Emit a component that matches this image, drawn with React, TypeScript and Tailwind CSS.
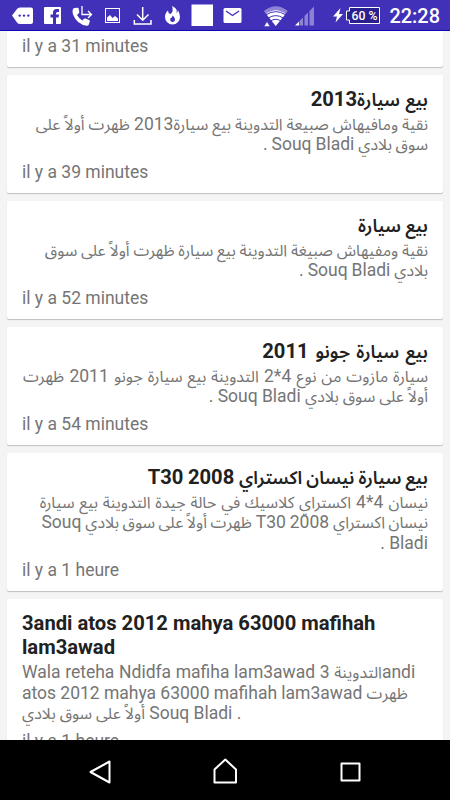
import React from "react";
import clsx from "clsx";

interface TextLine {
  text: string;
  spacing?: string;
}

interface Post {
  title: TextLine[];
  body: TextLine[];
  time: string;
  ltr?: boolean;
}

const posts: Post[] = [
  {
    title: [{ text: "بيع سيارة2013", spacing: "[word-spacing:1px]" }],
    body: [
      { text: "نقية ومافيهاش صبيعة التدوينة بيع سيارة2013 ظهرت أولاً على" },
      { text: "سوق بلادي Souq Bladi .", spacing: "[word-spacing:-0.4px]" },
    ],
    time: "il y a 39 minutes",
  },
  {
    title: [{ text: "بيع سيارة" }],
    body: [
      {
        text: "نقية ومفيهاش صبيغة التدوينة بيع سيارة ظهرت أولاً على سوق",
        spacing: "[word-spacing:-0.2px]",
      },
      { text: "بلادي Souq Bladi .", spacing: "[word-spacing:-0.4px]" },
    ],
    time: "il y a 52 minutes",
  },
  {
    title: [{ text: "بيع سيارة جونو 2011", spacing: "[word-spacing:1.8px]" }],
    body: [
      {
        text: "سيارة مازوت من نوع 4*2 التدوينة بيع سيارة جونو 2011 ظهرت",
        spacing: "[word-spacing:0.9px]",
      },
      { text: "أولاً على سوق بلادي Souq Bladi ." },
    ],
    time: "il y a 54 minutes",
  },
  {
    title: [
      {
        text: "بيع سيارة نيسان اكستراي T30 2008",
        spacing: "[word-spacing:-0.4px]",
      },
    ],
    body: [
      {
        text: "نيسان 4*4 اكستراي كلاسيك في حالة جيدة التدوينة بيع سيارة",
        spacing: "[word-spacing:0.8px]",
      },
      {
        text: "نيسان اكستراي T30 2008 ظهرت أولاً على سوق بلادي Souq",
        spacing: "[word-spacing:-0.4px]",
      },
      { text: "Bladi ." },
    ],
    time: "il y a 1 heure",
  },
  {
    title: [
      { text: "3andi atos 2012 mahya 63000 mafihah" },
      { text: "lam3awad" },
    ],
    body: [
      {
        text: "Wala reteha Ndidfa mafiha lam3awad التدوينة 3andi",
        spacing: "[word-spacing:0.3px]",
      },
      {
        text: "atos 2012 mahya 63000 mafihah lam3awad ظهرت",
        spacing: "[word-spacing:-0.1px]",
      },
      { text: "أولاً على سوق بلادي Souq Bladi ." },
    ],
    time: "il y a 1 heure",
    ltr: true,
  },
];

// Arabic runs get their own size so they sit well next to Roboto
function Line({ text, arabic }: { text: string; arabic: string }) {
  return (
    <>
      {text.split(/([\u0600-\u06FF]+(?:\s+[\u0600-\u06FF]+)*)/).map((part, i) =>
        i % 2 ? (
          <span key={i} className={clsx("leading-[0]", arabic)}>
            {part}
          </span>
        ) : (
          part
        )
      )}
    </>
  );
}

function PostCard({ post }: { post: Post }) {
  return (
    <article className="shrink-0 rounded-[2px] bg-white px-[15px] pt-[12px] pb-[10.6px] shadow-[0_1px_1px_rgba(0,0,0,0.22)]">
      <div dir={post.ltr ? "ltr" : "rtl"}>
        {post.title.map(({ text, spacing }) => (
          <h2
            key={text}
            className={clsx(
              "h-[24px] whitespace-nowrap text-[20.2px] leading-[24px] font-bold text-[#212121]",
              spacing
            )}
          >
            <Line text={text} arabic="text-[18px] font-semibold" />
          </h2>
        ))}
        <div className="mt-[3px]">
          {post.body.map(({ text, spacing }) => (
            <p
              key={text}
              className={clsx(
                "h-[20.4px] whitespace-nowrap text-[17.5px] leading-[20.4px] text-[#757575]",
                spacing
              )}
            >
              <Line text={text} arabic="text-[16px]" />
            </p>
          ))}
        </div>
      </div>
      <Time text={post.time} className="mt-[7.1px]" />
    </article>
  );
}

function Time({ text, className }: { text: string; className?: string }) {
  return (
    <div
      className={clsx(
        "h-[20.5px] text-[17.5px] leading-[20.5px] text-[#757575]",
        className
      )}
    >
      {text}
    </div>
  );
}

function StatusBar() {
  return (
    <header className="h-[31px] shrink-0 border-b border-[#0c08b0] bg-[#4131b9]">
      <svg width="450" height="30" viewBox="0 0 450 30" fill="#fff">
        <path d="M12 15.5 17 9Q18 7.5 20 7.5H31Q33 7.5 33 9.500V22Q33 24 31 24H20Q18 24 17 22.500Z" />
        <g fill="#4131b9">
          <circle cx="19.700" cy="15.600" r="1.200" />
          <circle cx="24" cy="15.600" r="1.200" />
          <circle cx="28.300" cy="15.600" r="1.200" />
        </g>
        <rect x="44" y="7" width="17" height="17" rx="1" />
        <path
          d="M53 24V17.500H50.500V14.500H53V12.500Q53 9 56.500 9H59V12H57.500Q56 12 56 13.500V14.500H59L58.500 17.500H56V24Z"
          fill="#4131b9"
        />
        <path d="M74.500 8 77.500 7.700Q78.500 7.700 78.700 8.700L79.300 12Q79.400 12.700 78.800 13.300L77 15Q79 18.600 82.300 20.400L84 18.800Q84.600 18.200 85.500 18.500L89 20Q90 20.500 89.800 21.400L88.800 24.500Q88.400 25.800 86.800 25.700Q77 24.500 73 14.500Q71.500 8.500 74.500 8Z" />
        <path
          d="M82 6V14.500H91M88 11 91.500 14.500 88 18"
          fill="none"
          stroke="#fff"
          strokeWidth="1.300"
        />
        <rect
          x="105.500"
          y="8.500"
          width="14"
          height="14"
          fill="none"
          stroke="#fff"
        />
        <path d="M107 21V17.500L110 15 112.500 18 115 16 118 18.500V21Z" />
        <g fill="none" stroke="#fff" strokeWidth="1.500">
          <path d="M142.700 7V20M137 14.500 142.700 20.200 148.500 14.500" />
          <path d="M134.300 20V24H151V20" />
        </g>
        <path d="M172 6Q178 8.500 176.500 13Q178 12.500 177.700 10Q180 13 180 17A7.500 7.500 0 0 1 165 17Q165 13 168 10.500Q168.500 14 170.500 14Q174 11 172 6ZM172.500 15.500Q172.500 17.500 170.500 18.300Q169.500 20 171 21.500Q173 22.500 174.700 21Q175.800 18 172.500 15.500Z" />
        <rect x="191.500" y="4.500" width="21.500" height="21.500" />
        <rect x="223.500" y="8" width="18" height="15" rx="1.500" />
        <path
          d="M226 11 232.500 15.500 239 11"
          fill="none"
          stroke="#4131b9"
          strokeWidth="1.400"
        />
        <path d="M275.800 26 263.800 11Q275.800 1.500 287.800 11Z" opacity="0.400" />
        <path d="M275.800 26 266.200 14Q275.800 6.500 285.400 14Z" />
        <g fill="none" stroke="#4131b9" strokeWidth="1">
          <path d="M266 14.800Q275.800 8.500 285.600 14.800" />
          <path d="M268 18.200Q275.800 13 283.600 18.200" />
          <path d="M270 21.500Q275.800 17 281.600 21.500" />
        </g>
        <path
          d="M264 26.500 267 21.500 270 26.500Z"
          stroke="#4131b9"
          strokeWidth="0.500"
        />
        <g opacity="0.400">
          <path d="M299.500 21 303 17.500V25.500H299.500ZM304.500 16 308 12.500V25.500H304.500ZM309.500 11 314 6.500V25.500H309.500Z" />
        </g>
        <path d="M295 25.500 299 21.500V25.500Z" />
        <path d="M340.500 8 333 16.500H337L335.500 22.500 343 14H339Z" />
        <path
          d="M349.500 7.500H379.500V23.500H349.500V20H346.500V11H349.500Z"
          fill="#2a1f8e"
          stroke="#fff"
        />
        <text
          x="351.500"
          y="20"
          fontSize="12.500"
          fontWeight="500"
          textLength="26"
          lengthAdjust="spacingAndGlyphs"
        >
          60 %
        </text>
        <text
          x="389.500"
          y="23.300"
          fontSize="20.500"
          fontWeight="500"
          textLength="50.500"
          lengthAdjust="spacingAndGlyphs"
        >
          22:28
        </text>
      </svg>
    </header>
  );
}

function NavBar() {
  return (
    <nav className="h-[60px] shrink-0 bg-black">
      <svg
        width="450"
        height="60"
        viewBox="0 0 450 60"
        fill="none"
        stroke="#fff"
        strokeWidth="2"
        strokeLinejoin="round"
      >
        <path d="M109.500 21.500V42.500L90.500 32Z" />
        <path d="M214.500 42.500V29.500L225.300 19.500 236 29.500V42.500Z" />
        <path d="M341.500 23.500H359.500V40.500H341.500Z" />
      </svg>
    </nav>
  );
}

export default function App() {
  return (
    <div className="flex h-[800px] w-[450px] flex-col overflow-hidden bg-[#f4f4f4] font-[Roboto,'Noto_Sans_Arabic','DejaVu_Sans',sans-serif]">
      <StatusBar />
      <main className="flex min-h-0 flex-1 flex-col gap-[8px] overflow-hidden px-[7px]">
        <div className="shrink-0 rounded-b-[2px] bg-white px-[15px] pt-[5px] pb-[10.5px] shadow-[0_1px_1px_rgba(0,0,0,0.22)]">
          <Time text="il y a 31 minutes" />
        </div>
        {posts.map((post, i) => (
          <PostCard key={i} post={post} />
        ))}
      </main>
      <NavBar />
    </div>
  );
}
